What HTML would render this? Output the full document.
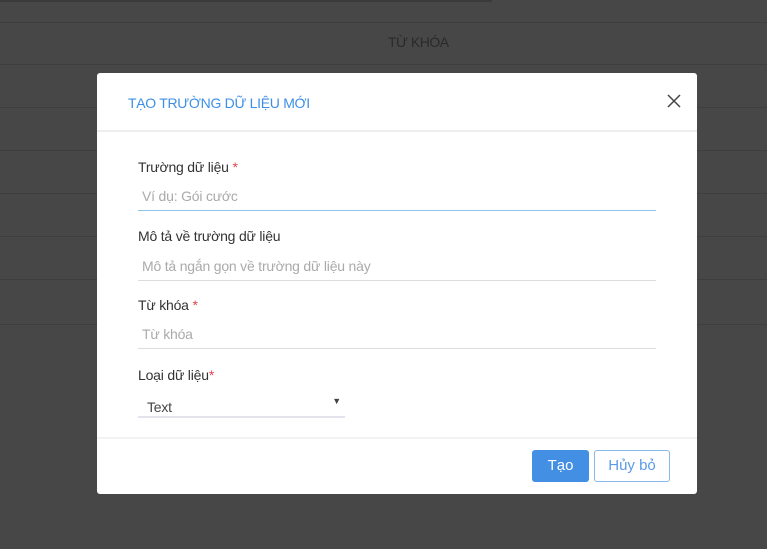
<!DOCTYPE html>
<html><head><meta charset="utf-8"><style>
body{margin:0;width:767px;height:549px;background:#474747;position:relative;overflow:hidden;font-family:"Liberation Sans","DejaVu Sans",sans-serif;}
.line{position:absolute;left:0;width:767px;height:1px;background:#3e3e3e}
.modal{position:absolute;left:97px;top:73px;width:600px;height:421px;background:#fff;border-radius:3px;}
.title{position:absolute;left:31px;top:22px;color:#3d8fe6;font-size:14px;letter-spacing:-0.3px}
.x{position:absolute;left:570px;top:21px}
.hr{position:absolute;left:0;width:600px;height:2px;background:#eee}
.lab{position:absolute;left:41px;font-size:14px;color:#333;letter-spacing:-0.2px}
.lab span{color:#e0454f}
.inp{position:absolute;left:41px;width:514px;border-bottom:1px solid #ddd;font-size:14px;color:#aaa;padding-left:4px;height:22px;letter-spacing:-0.2px}
.btn{position:absolute;top:377px;height:32px;border-radius:3px;font-size:15px;text-align:center;line-height:32px}
</style></head><body>
<div style="position:absolute;left:0;top:0;width:492px;height:2px;background:#3a3a3a"></div>
<div class="line" style="top:22px"></div>
<div class="line" style="top:64px"></div>
<div class="line" style="top:107px"></div>
<div class="line" style="top:150px"></div>
<div class="line" style="top:193px"></div>
<div class="line" style="top:236px"></div>
<div class="line" style="top:279px"></div>
<div class="line" style="top:324px"></div>
<div style="position:absolute;left:388px;top:34px;font-size:14px;color:#2a2a2a;letter-spacing:-0.5px">TỪ KHÓA</div>
<div class="modal">
<div class="title">TẠO TRƯỜNG DỮ LIỆU MỚI</div>
<svg class="x" width="14" height="14" viewBox="0 0 14 14"><path d="M1 1L13 13M13 1L1 13" stroke="#444" stroke-width="1.5"/></svg>
<div class="hr" style="top:57px"></div>
<div class="lab" style="top:86px">Trường dữ liệu <span>*</span></div>
<div class="inp" style="top:115px;height:22px;border-bottom-color:#8cc4f0">Ví dụ: Gói cước</div>
<div class="lab" style="top:155px">Mô tả về trường dữ liệu</div>
<div class="inp" style="top:185px">Mô tả ngắn gọn về trường dữ liệu này</div>
<div class="lab" style="top:224px">Từ khóa <span>*</span></div>
<div class="inp" style="top:253px">Từ khóa</div>
<div class="lab" style="top:294px">Loại dữ liệu<span>*</span></div>
<div class="inp" style="top:326px;width:198px;height:17px;color:#444;padding-left:9px;border-bottom:2px solid #e4e2ea">Text<span style="position:absolute;right:4px;top:-3px;font-size:9px;color:#444">▼</span></div>
<div class="hr" style="top:364px;height:2px;background:#f3f3f3"></div>
<div class="btn" style="left:435px;width:57px;background:#428fe4;color:#fff">Tạo</div>
<div class="btn" style="left:497px;width:74px;height:30px;border:1px solid #8bb8ec;color:#5b9be6;line-height:30px">Hủy bỏ</div>
</div>
</body></html>
